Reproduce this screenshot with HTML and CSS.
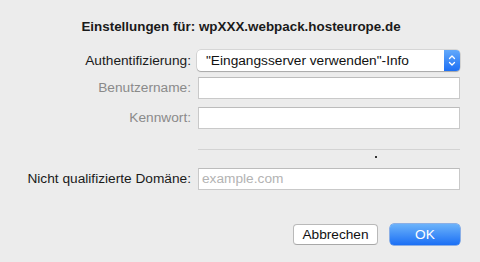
FILE: index.html
```html
<!DOCTYPE html>
<html lang="de">
<head>
<meta charset="utf-8">
<title>Einstellungen</title>
<link rel="stylesheet" href="styles.css">
</head>
<body>
<div class="dialog">
  <div class="title">Einstellungen für: wpXXX.webpack.hosteurope.de</div>
  <div class="form">
    <div class="row row-auth">
      <label class="label">Authentifizierung:</label>
      <div class="popup">
        <span class="popup-text">"Eingangsserver verwenden"-Info</span>
        <span class="stepper">
          <svg width="16" height="21" viewBox="0 0 16 21"><path d="M5.5 8.5 L8 6 L10.5 8.5" fill="none" stroke="#fff" stroke-width="1.3" stroke-linecap="round" stroke-linejoin="round"/><path d="M5.5 12.5 L8 15 L10.5 12.5" fill="none" stroke="#fff" stroke-width="1.3" stroke-linecap="round" stroke-linejoin="round"/></svg>
        </span>
      </div>
    </div>
    <div class="row row-user">
      <label class="label disabled">Benutzername:</label>
      <div class="field"></div>
    </div>
    <div class="row row-pass">
      <label class="label disabled">Kennwort:</label>
      <div class="field"></div>
    </div>
    <div class="row row-sep">
      <span></span>
      <div class="sep-cell">
        <div class="sep"></div>
        <div class="dot"></div>
      </div>
    </div>
    <div class="row row-domain">
      <label class="label">Nicht qualifizierte Domäne:</label>
      <div class="field"><span class="placeholder">example.com</span></div>
    </div>
  </div>
  <div class="buttons">
    <button class="btn btn-cancel">Abbrechen</button>
    <button class="btn btn-ok">OK</button>
  </div>
</div>
</body>
</html>
```
FILE: styles.css
```css
html, body {
  margin: 0;
  padding: 0;
  background: #ececec;
}
body {
  font-family: "Liberation Sans", Arial, sans-serif;
  font-size: 13.7px;
  color: #1a1a1a;
  width: 480px;
  height: 262px;
  overflow: hidden;
}
.dialog {
  padding-top: 19px;
}
.title {
  text-align: center;
  font-weight: bold;
  font-size: 13.4px;
  line-height: 16px;
  height: 16px;
  padding-left: 2px;
}
.form {
  display: flex;
  flex-direction: column;
}
.row {
  display: grid;
  grid-template-columns: 191px 262px;
  column-gap: 7px;
  align-items: center;
}
.label {
  text-align: right;
  line-height: 16px;
  white-space: nowrap;
}
.label.disabled {
  color: #8a8a8a;
}
.row-auth { margin-top: 15px; }
.row-user { margin-top: 6px; }
.row-pass { margin-top: 8px; }
.row-sep { margin-top: 20px; align-items: start; }
.row-domain { margin-top: 10px; }
.popup {
  margin-left: -1px;
  height: 21px;
  box-sizing: border-box;
  background: #fff;
  border-radius: 4px;
  box-shadow: 0 0 0 0.5px rgba(0,0,0,0.18), 0 1px 1px rgba(0,0,0,0.22);
  display: flex;
  align-items: center;
  overflow: hidden;
}
.popup-text {
  flex: 1;
  padding-left: 9px;
  line-height: 16px;
  color: #111;
}
.stepper {
  width: 16px;
  height: 21px;
  background: linear-gradient(#62a9fb, #1d6ff4);
  display: flex;
}
.field {
  height: 22px;
  box-sizing: border-box;
  background: #fff;
  border: 1px solid #c9c9c9;
  border-top-color: #bcbcbc;
  display: flex;
  align-items: center;
}
.placeholder {
  color: #b3b3b3;
  padding-left: 3px;
  line-height: 16px;
}
.sep-cell {
  display: flex;
  flex-direction: column;
}
.sep {
  height: 1px;
  background: #d3d3d3;
}
.dot {
  width: 2px;
  height: 2px;
  background: #333;
  margin-top: 6px;
  margin-left: 177px;
}
.buttons {
  display: flex;
  justify-content: flex-end;
  gap: 12px;
  padding-right: 20px;
  margin-top: 34px;
}
.btn {
  font-family: "Liberation Sans", Arial, sans-serif;
  font-size: 13.7px;
  height: 21px;
  padding: 0;
  border-radius: 4px;
  line-height: 16px;
}
.btn-cancel {
  width: 85px;
  background: #fff;
  border: 1px solid #b9b9b9;
  border-bottom-color: #a8a8a8;
  color: #111;
}
.btn-ok {
  width: 70px;
  border: none;
  background: linear-gradient(#6cb3fa, #1b6ff5);
  box-shadow: 0 0 0 0.5px #2a73e0;
  color: #fff;
}
```
